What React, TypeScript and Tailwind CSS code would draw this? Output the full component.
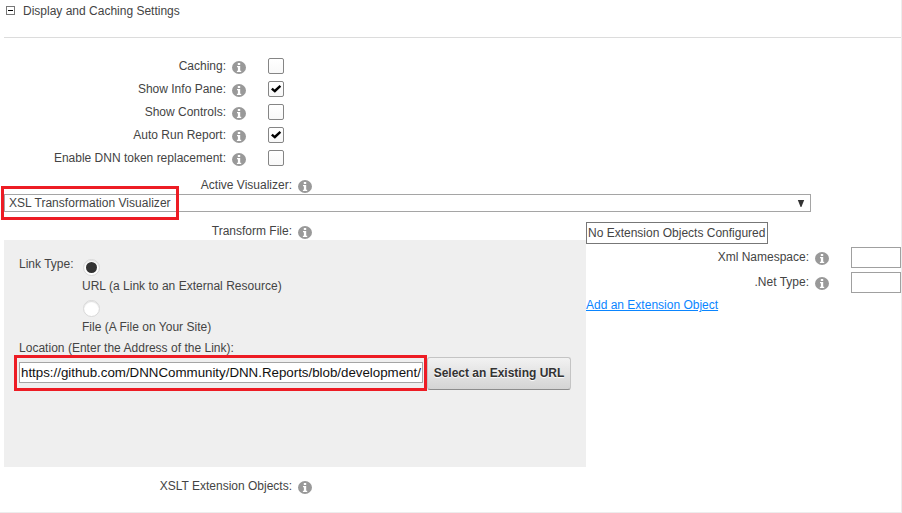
import React from "react";

function Info() {
  return (
    <svg className="block h-[13px] w-[14px] shrink-0" viewBox="0 0 14 13">
      <ellipse cx="7" cy="6.5" rx="7" ry="6.5" fill="#999" />
      <path d="M5.8 2h2.4v2H5.8zM5 5h3.2v4.8h1V11H4.9V9.8h1V6.2H5z" fill="#fff" />
    </svg>
  );
}

function Field({ label, width }: { label: string; width: string }) {
  return (
    <div className={`flex h-[23px] items-start justify-end ${width}`}>
      <span className="pt-[3px] leading-4">{label}</span>
      <span className="ml-[6px] pt-[6px]">
        <Info />
      </span>
    </div>
  );
}

function Check({ on }: { on: boolean }) {
  return (
    <span className="mt-[3px] ml-[22px] block h-4 w-4 rounded-[2px] border border-[#858585] bg-gradient-to-b from-white to-[#f8f8f8]">
      {on && (
        <svg viewBox="0 0 14 14" className="block h-[14px] w-[14px]">
          <path d="M2 7.4 3.7 5.8 5.6 7.6 10.6 3.1 12.2 4.8 5.9 10.8z" fill="#000" />
        </svg>
      )}
    </span>
  );
}

function Radio({ on }: { on: boolean }) {
  return (
    <span className="ml-px flex h-[17px] w-[17px] items-center justify-center rounded-full border border-[#d8d8d8] bg-white shadow-[inset_0_1px_1px_#ddd]">
      {on && <span className="h-[11px] w-[11px] rounded-full bg-[#333]" />}
    </span>
  );
}

const options = [
  { label: "Caching:", on: false },
  { label: "Show Info Pane:", on: true },
  { label: "Show Controls:", on: false },
  { label: "Auto Run Report:", on: true },
  { label: "Enable DNN token replacement:", on: false },
];

export default function App() {
  return (
    <div className="h-[513px] w-[902px] overflow-hidden bg-white font-['Liberation_Sans',Arial,sans-serif] text-[12px] text-[#444]">
      <div className="h-[513px] w-[902px] border-r border-b border-[#ededed] pl-1">
        <header className="flex h-[38px] items-start border-b border-[#dcdcdc]">
          <span className="mt-[6px] ml-[2px] flex h-[9px] w-[9px] items-center justify-center border border-[#777]">
            <span className="h-px w-[5px] bg-black" />
          </span>
          <span className="mt-[3px] ml-2 leading-4">Display and Caching Settings</span>
        </header>

        <div className="pt-[17px]">
          {options.map((o) => (
            <div key={o.label} className="flex">
              <Field label={o.label} width="w-[242px]" />
              <Check on={o.on} />
            </div>
          ))}
        </div>

        <div className="mt-1 flex h-[20px]">
          <Field label="Active Visualizer:" width="w-[308px]" />
        </div>
        <div className="relative flex h-[18px] w-[807px] items-center justify-between border border-[#a5a5a5] pr-[5px] pl-1">
          <span className="leading-4 tracking-[0.03px]">XSL Transformation Visualizer</span>
          <svg className="h-[7px] w-[8px]" viewBox="0 0 8 7">
            <path d="M.8 0h6.4L4.4 7h-.8z" fill="#333" />
          </svg>
          <span className="absolute -top-[9px] -left-[4px] h-[34px] w-[178px] border-[3px] border-[#ed1c24]" />
        </div>

        <div className="flex pt-[8px]">
          <section className="w-[582px]">
            <div className="h-[20px]">
              <Field label="Transform File:" width="w-[308px]" />
            </div>
            <div className="h-[227px] bg-[#efefef] pt-4 pl-[15px]">
              <div className="flex">
                <span className="w-[63px] leading-4">Link Type:</span>
                <div>
                  <div className="flex h-[22px] items-start pt-[3px]"><Radio on /></div>
                  <div className="h-[19px] leading-4 tracking-[0.02px]">URL (a Link to an External Resource)</div>
                  <div className="flex h-[22px] items-start pt-[3px]"><Radio on={false} /></div>
                  <div className="h-[21px] leading-4 tracking-[0.02px]">File (A File on Your Site)</div>
                </div>
              </div>
              <div className="h-[17px] leading-4 tracking-[0.02px]">Location (Enter the Address of the Link):</div>
              <div className="flex">
                <div className="relative mt-[5px] h-[21px] w-[404px] border border-[#a5a5a5] bg-white pl-px text-[13.333px] leading-[19px] tracking-[-0.015px] whitespace-nowrap text-[#111]">
                  https://github.com/DNNCommunity/DNN.Reports/blob/development/
                  <span className="absolute -top-[8px] -left-[6px] h-[36px] w-[413px] border-[3px] border-[#ed1c24]" />
                </div>
                <button className="ml-1 h-[33px] w-[144px] rounded-[3px] border border-[#c4c4c4] border-b-[#8c8c8c] bg-gradient-to-b from-[#f2f2f2] to-[#d4d4d4] pb-[2px] text-[12px] font-bold whitespace-nowrap text-[#333] [text-shadow:0_1px_1px_white]">
                  Select an Existing URL
                </button>
              </div>
            </div>
            <div className="pt-[8px]">
              <Field label="XSLT Extension Objects:" width="w-[308px]" />
            </div>
          </section>

          <section className="pt-[2px]">
            <div className="flex h-[22px] w-[182px] items-center border border-[#777] pl-px leading-4 whitespace-nowrap">
              No Extension Objects Configured
            </div>
            <div className="mt-[2px] flex h-[25px]">
              <Field label="Xml Namespace:" width="w-[243px]" />
              <span className="mt-px ml-[22px] h-[21px] w-[50px] border border-[#a0a0a0]" />
            </div>
            <div className="flex h-[25px]">
              <Field label=".Net Type:" width="w-[243px]" />
              <span className="mt-px ml-[22px] h-[21px] w-[50px] border border-[#a0a0a0]" />
            </div>
            <a href="#" className="inline-block leading-4 text-[#0a85ff] underline">Add an Extension Object</a>
          </section>
        </div>
      </div>
    </div>
  );
}
